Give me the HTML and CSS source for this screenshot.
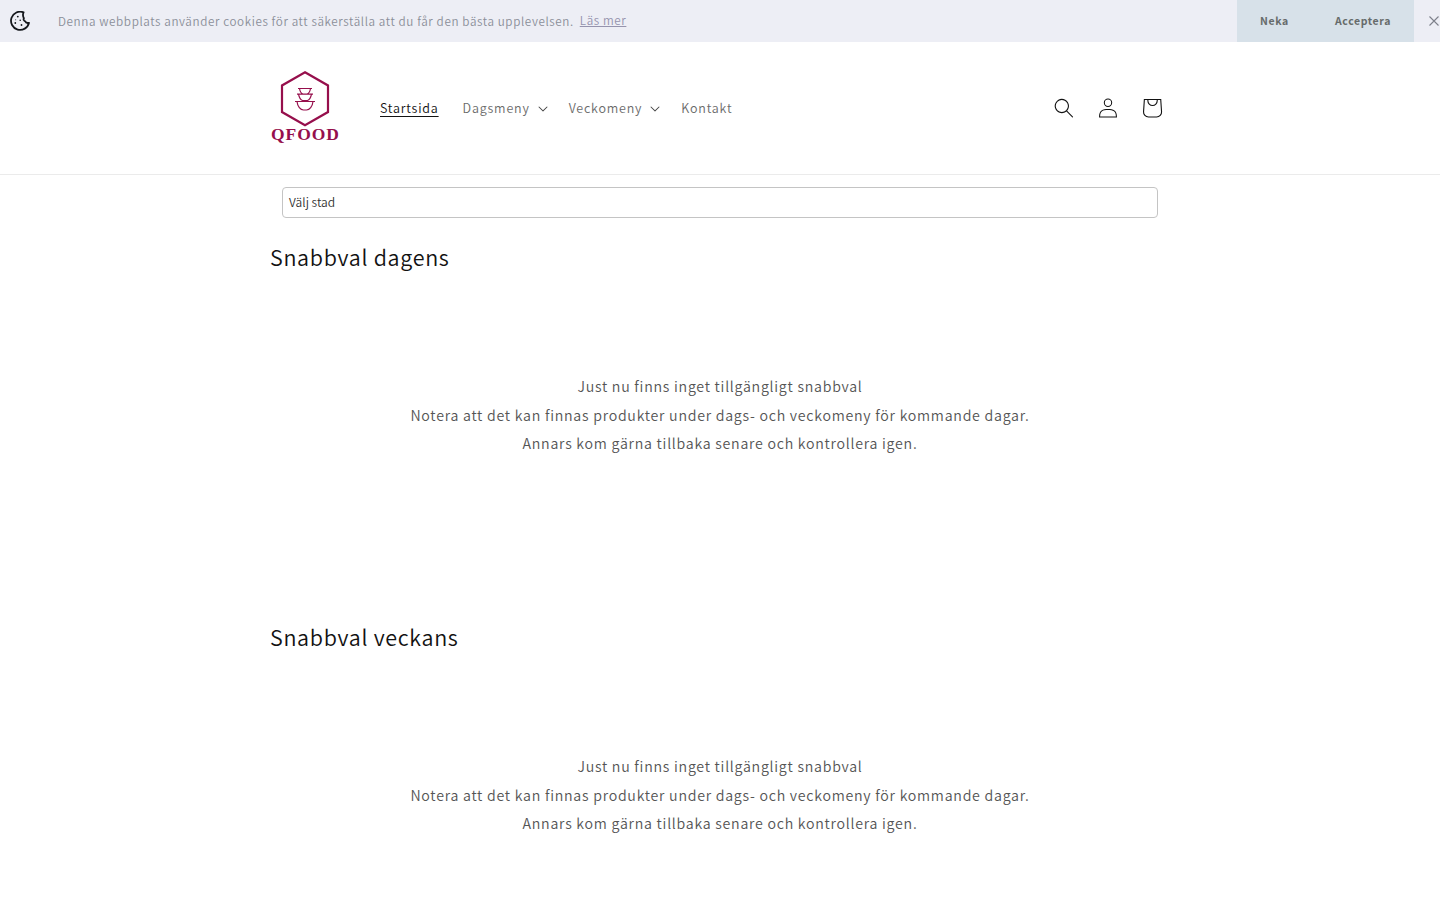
FILE: index.html
```html
<!DOCTYPE html>
<html lang="sv">
<head>
  <meta charset="UTF-8">
  <title>QFOOD</title>
  <meta name="viewport" content="width=device-width, initial-scale=1.0">
  <link rel="stylesheet" href="styles.css">
</head>
<body>
  <div class="cookie-bar">
    <svg class="cookie-icon" viewBox="0 0 20 20" fill="none" stroke="#14171c" stroke-width="1.8" stroke-linejoin="round">
      <path d="M13.600 1.400A9.100 9.100 0 1 0 19 11.800C17.300 12.200 15.600 11.500 15.200 10.300 13.700 9.700 13.200 8.500 13.900 7.200 12.900 5.400 12.800 3 13.600 1.400z"/>
      <g fill="#14171c" stroke="none">
        <circle cx="7.800" cy="5.600" r=".9"/><circle cx="5.300" cy="12" r=".9"/><circle cx="10.200" cy="9.300" r=".8"/><circle cx="11.500" cy="14" r=".9"/><circle cx="5.700" cy="8.800" r=".5"/>
      </g>
    </svg>
    <p class="cookie-text">Denna webbplats använder cookies för att säkerställa att du får den bästa upplevelsen.</p>
    <a class="cookie-link" href="#">Läs mer</a>
    <div class="cookie-buttons">
      <button class="btn-deny">Neka</button>
      <button class="btn-accept">Acceptera</button>
    </div>
    <button class="cookie-close" aria-label="Stäng">
      <svg viewBox="0 0 10 10" width="10" height="10" stroke="#7d808a" stroke-width="1.1"><path d="M.5.5l9 9M9.500.5l-9 9"/></svg>
    </button>
  </div>

  <header class="header">
    <div class="page-width header-inner">
      <a class="logo" href="#">
        <svg viewBox="0 0 70 76" width="70" height="76" fill="none" stroke="#960f4c">
          <path stroke-width="2.200" d="M35 2.300L58 15.500V42L35 55.200 12 42V15.500z"/>
          <path stroke-width="1.200" d="M28 18.500h14M29.500 18.500c.5 3 1.800 5 3.500 5.500h4c1.700-.5 3-2.500 3.500-5.500M27 24.200h16M28.500 24.200c.7 3.500 2 5.800 4 6.300h5c2-.5 3.300-2.800 4-6.300M25 31.500h20M27 31.500c.5 5 3.500 8.500 6.500 8.500h3c3 0 6-3.500 6.500-8.500"/>
          <text class="logo-text" x="1" y="70" textLength="68" lengthAdjust="spacing">QFOOD</text>
        </svg>
      </a>
      <nav class="menu">
        <a class="active" href="#">Startsida</a>
        <a class="has-sub" href="#">Dagsmeny
          <svg class="caret" viewBox="0 0 10 6"><path d="M9.354.646a.5.5 0 00-.708 0L5 4.293 1.354.646a.5.5 0 00-.708.708l4 4a.5.5 0 00.708 0l4-4a.5.5 0 000-.708z"/></svg>
        </a>
        <a class="has-sub" href="#">Veckomeny
          <svg class="caret" viewBox="0 0 10 6"><path d="M9.354.646a.5.5 0 00-.708 0L5 4.293 1.354.646a.5.5 0 00-.708.708l4 4a.5.5 0 00.708 0l4-4a.5.5 0 000-.708z"/></svg>
        </a>
        <a href="#">Kontakt</a>
      </nav>
      <div class="header-icons">
        <a href="#" aria-label="Sök">
          <svg viewBox="0 0 18 19" width="20" height="20"><path fill-rule="evenodd" d="M11.030 11.680A5.784 5.784 0 112.850 3.500a5.784 5.784 0 018.180 8.180zm.26 1.120a6.780 6.780 0 11.720-.7l5.400 5.400a.5.5 0 11-.71.7l-5.410-5.400z"/></svg>
        </a>
        <a href="#" aria-label="Logga in">
          <svg viewBox="0 0 18 19" width="20" height="20"><path fill-rule="evenodd" d="M6 4.500a3 3 0 116 0 3 3 0 01-6 0zm3-4a4 4 0 100 8 4 4 0 000-8zm5.580 12.150c1.120.82 1.830 2.240 1.910 4.850H1.510c.08-2.600.79-4.030 1.900-4.850C4.660 11.750 6.500 11.500 9 11.500s4.350.26 5.580 1.150zM9 10.500c-2.500 0-4.650.24-6.170 1.350C1.270 12.980.5 14.930.5 18v.5h17V18c0-3.070-.77-5.020-2.330-6.150-1.520-1.100-3.670-1.350-6.170-1.350z"/></svg>
        </a>
        <a href="#" aria-label="Varukorg">
          <svg viewBox="0 0 40 40" width="44" height="44"><path fill-rule="evenodd" d="M15.750 11.800h-3.160l-.77 11.600a5 5 0 0 0 4.990 5.340h7.380a5 5 0 0 0 4.990-5.330l-.78-11.610zm0 1h-2.220l-.71 10.670a4 4 0 0 0 3.990 4.270h7.380a4 4 0 0 0 4-4.270l-.72-10.670h-2.220v.63a4.750 4.750 0 1 1 -9.500 0zm8.500 0h-7.500v.63a3.750 3.750 0 1 0 7.500 0z"/></svg>
        </a>
      </div>
    </div>
  </header>

  <main class="page-width">
    <div class="city-select">Välj stad</div>

    <section class="quick">
      <h2>Snabbval dagens</h2>
      <div class="empty">
        <p>Just nu finns inget tillgängligt snabbval</p>
        <p>Notera att det kan finnas produkter under dags- och veckomeny för kommande dagar.</p>
        <p>Annars kom gärna tillbaka senare och kontrollera igen.</p>
      </div>
    </section>

    <section class="quick">
      <h2>Snabbval veckans</h2>
      <div class="empty">
        <p>Just nu finns inget tillgängligt snabbval</p>
        <p>Notera att det kan finnas produkter under dags- och veckomeny för kommande dagar.</p>
        <p>Annars kom gärna tillbaka senare och kontrollera igen.</p>
      </div>
    </section>
  </main>
</body>
</html>
```
FILE: styles.css
```css
* {
  box-sizing: border-box;
}

body {
  margin: 0;
  background: #fff;
  color: #555;
  font-family: "Noto Sans CJK SC", "Open Sans", sans-serif;
  font-size: 14.2px;
  font-weight: 350;
  letter-spacing: 0.74px;
}

a {
  color: inherit;
  text-decoration: none;
}

p, h2 {
  margin: 0;
}

svg {
  display: block;
}

button {
  padding: 0;
  border: none;
  background: none;
  font-family: inherit;
  cursor: pointer;
}

.page-width {
  width: 900px;
  margin: 0 auto;
}

/* Cookie bar */
.cookie-bar {
  display: flex;
  align-items: center;
  height: 42px;
  padding-left: 10px;
  background: #edeef5;
  color: #8b8e99;
  font-size: 11.7px;
  letter-spacing: 0.6px;
  line-height: 20px;
  white-space: nowrap;
}

.cookie-icon {
  width: 20px;
  height: 20px;
  margin-right: 28px;
}

.cookie-link {
  margin: 0 0 2px 6px;
  color: #9593ad;
  text-decoration: underline;
}

.cookie-buttons {
  display: flex;
  height: 42px;
  margin-left: auto;
  background: #d7e1e9;
}

.cookie-buttons button {
  padding-bottom: 1px;
  color: #666b6b;
  font-size: 10.5px;
  font-weight: bold;
  letter-spacing: 0.6px;
}

.btn-deny {
  width: 75px;
}

.btn-accept {
  width: 102px;
}

.cookie-close {
  width: 26px;
  padding-left: 15px;
}

/* Header */
.header {
  height: 133px;
  border-bottom: 1px solid #ebebeb;
}

.header-inner {
  display: flex;
  align-items: center;
  height: 132px;
}

.logo {
  margin-right: 40px;
}

.logo-text {
  fill: #960f4c;
  stroke: none;
  font-family: "Liberation Serif", serif;
  font-size: 17.5px;
  font-weight: bold;
  letter-spacing: 0;
}

.menu {
  display: flex;
  gap: 24px;
  color: #6b6b6b;
  font-size: 12.5px;
  letter-spacing: 0.8px;
  line-height: 18px;
}

.menu .active {
  color: #121212;
  text-decoration: underline;
  text-underline-offset: 3px;
}

.has-sub {
  display: flex;
  align-items: center;
  margin-right: -3px;
}

.caret {
  width: 10px;
  height: 6px;
  margin: 2px 0 0 8px;
  fill: #444;
}

.header-icons {
  display: flex;
  margin: 0 -4px 0 auto;
  fill: #121212;
}

.header-icons a {
  display: flex;
  align-items: center;
  justify-content: center;
  width: 44px;
  height: 44px;
}

/* Content */
.city-select {
  height: 31px;
  margin: 12px 12px 23px;
  padding-left: 6px;
  border: 1px solid #c4c4c4;
  border-radius: 4px;
  color: #333;
  font-size: 12px;
  letter-spacing: 0;
  line-height: 28px;
}

.quick {
  height: 380px;
}

.quick + .quick {
  height: 279px;
}

.quick h2 {
  color: #121212;
  font-size: 21.5px;
  font-weight: 350;
  letter-spacing: 0.7px;
  line-height: 31px;
}

.empty {
  padding-top: 100px;
  text-align: center;
  line-height: 28.7px;
}
```
